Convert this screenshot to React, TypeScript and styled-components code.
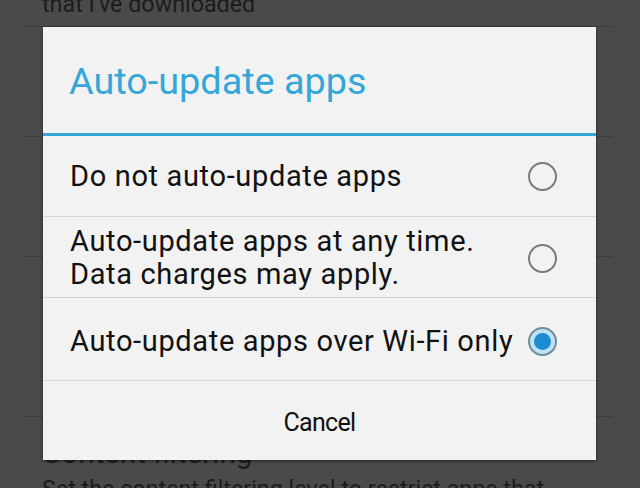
import React from "react";
import styled, { createGlobalStyle } from "styled-components";

const Global = createGlobalStyle`
  html, body { margin: 0; padding: 0; }
  body {
    width: 640px;
    height: 488px;
    overflow: hidden;
    background: #4a4a4a;
    font-family: Roboto, "Noto Sans", sans-serif;
  }
`;

const Screen = styled.div`
  position: relative;
  width: 640px;
  height: 488px;
  overflow: hidden;
  background: #4a4a4a;
`;

const Backdrop = styled.div`
  display: flex;
  flex-direction: column;
  padding: 0 28px 0 24px;
  margin-top: -40px;
`;

const BgItem = styled.div<{ $h: number; $pb?: number }>`
  height: ${(p) => p.$h}px;
  box-sizing: border-box;
  padding-left: 18px;
  padding-bottom: ${(p) => p.$pb ?? 0}px;
  border-bottom: 1px solid #3b3b3b;
  display: flex;
  flex-direction: column;
  justify-content: flex-end;
  color: #1c1c1c;
`;

const BgTitle = styled.div`
  font-size: 29.6px;
  line-height: 34px;
  white-space: nowrap;
`;

const BgSub = styled.div<{ $mt?: number }>`
  font-size: 23.3px;
  line-height: 28px;
  margin-top: ${(p) => p.$mt ?? 0}px;
  white-space: nowrap;
`;

const BgBottom = styled.div`
  padding-left: 18px;
  padding-top: 19px;
  color: #1c1c1c;
`;

const Dialog = styled.div`
  position: absolute;
  top: 27px;
  left: 43px;
  width: 553px;
  height: 433px;
  background: #f2f2f2;
  box-shadow: 0 1px 3px rgba(0, 0, 0, 0.5);
  display: flex;
  flex-direction: column;
`;

const TitleBar = styled.div`
  display: flex;
  align-items: center;
  padding-left: 26px;
  border-bottom: 3px solid #33a5d7;
  box-sizing: border-box;
  height: 109px;
`;

const Title = styled.div`
  color: #35a6d8;
  font-size: 37.8px;
  margin-top: 2px;
`;

const Row = styled.div<{ $h: number; $dy?: number }>`
  height: ${(p) => p.$h}px;
  box-sizing: border-box;
  border-bottom: 1px solid #d6d6d6;
  display: flex;
  align-items: center;
  justify-content: space-between;
  padding: ${(p) => p.$dy ?? 0}px 39px 0 27px;
  color: #111;
`;

const Label = styled.div`
  font-size: 29px;
  letter-spacing: 0.65px;
  line-height: 33px;
  white-space: nowrap;
`;

const Radio = styled.div<{ $on?: boolean }>`
  width: 29px;
  height: 29px;
  border-radius: 50%;
  box-sizing: border-box;
  border: 2px solid ${(p) => (p.$on ? "#6f8d9c" : "#7a7a7a")};
  background: ${(p) => (p.$on ? "#bfe3f3" : "transparent")};
  display: flex;
  align-items: center;
  justify-content: center;
  flex-shrink: 0;
`;

const Dot = styled.div`
  width: 17px;
  height: 17px;
  border-radius: 50%;
  background: #1b8bd2;
`;

const CancelBar = styled.div`
  flex: 1;
  display: flex;
  align-items: center;
  justify-content: center;
  font-size: 25px;
  letter-spacing: -0.7px;
  color: #111;
  padding-top: 4px;
`;

export default function App() {
  return (
    <Screen>
      <Global />
      <Backdrop>
        <BgItem $h={67} $pb={8}>
          <BgSub>that I've downloaded</BgSub>
        </BgItem>
        <BgItem $h={110} $pb={20}>
          <BgTitle>Auto-update apps</BgTitle>
        </BgItem>
        <BgItem $h={120} $pb={20}>
          <BgTitle>Auto-add widgets</BgTitle>
          <BgSub>Add icons to Home screen for new apps</BgSub>
        </BgItem>
        <BgItem $h={160} $pb={30}>
          <BgTitle>Clear search history</BgTitle>
          <BgSub>Remove all searches you have performed</BgSub>
        </BgItem>
        <BgBottom>
          <BgTitle>Content filtering</BgTitle>
          <BgSub $mt={5}>Set the content filtering level to restrict apps that</BgSub>
        </BgBottom>
      </Backdrop>
      <Dialog>
        <TitleBar>
          <Title>Auto-update apps</Title>
        </TitleBar>
        <Row $h={81}>
          <Label>Do not auto-update apps</Label>
          <Radio />
        </Row>
        <Row $h={81} $dy={2}>
          <Label>
            Auto-update apps at any time.
            <br />
            Data charges may apply.
          </Label>
          <Radio />
        </Row>
        <Row $h={83} $dy={4}>
          <Label>Auto-update apps over Wi-Fi only</Label>
          <Radio $on>
            <Dot />
          </Radio>
        </Row>
        <CancelBar>Cancel</CancelBar>
      </Dialog>
    </Screen>
  );
}
